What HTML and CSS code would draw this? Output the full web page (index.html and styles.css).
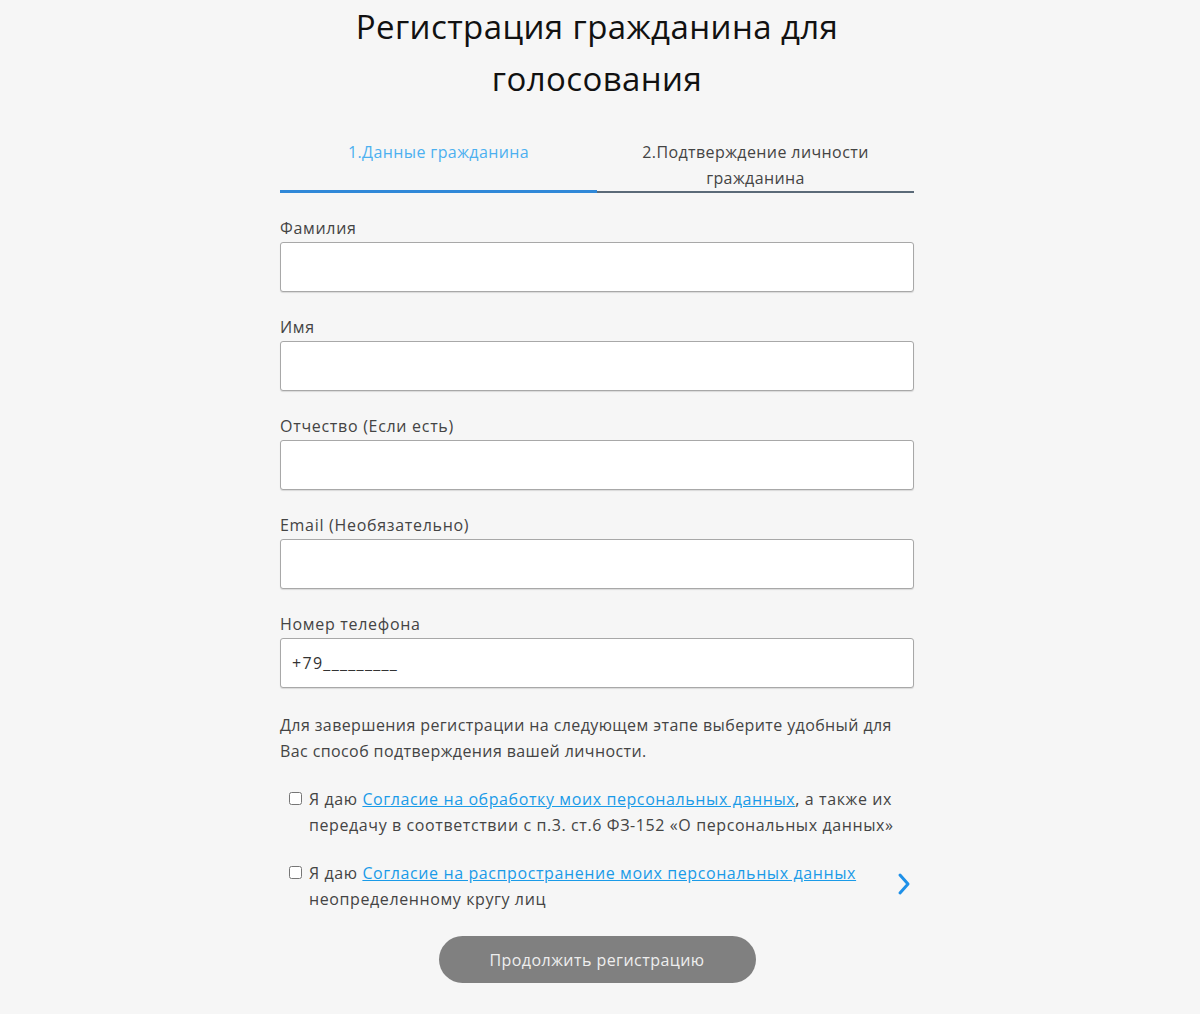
FILE: index.html
```html
<!DOCTYPE html>
<html lang="ru">
<head>
<meta charset="utf-8">
<title>Регистрация гражданина для голосования</title>
<link rel="stylesheet" href="styles.css">
</head>
<body>
<main class="page">
  <h1 class="title">Регистрация гражданина для голосования</h1>
  <div class="tabs">
    <div class="tab tab-active">1.Данные гражданина</div>
    <div class="tab">2.Подтверждение личности гражданина</div>
  </div>
  <form class="form">
    <label class="field">
      <span class="label">Фамилия</span>
      <input class="input" type="text">
    </label>
    <label class="field">
      <span class="label">Имя</span>
      <input class="input" type="text">
    </label>
    <label class="field">
      <span class="label">Отчество (Если есть)</span>
      <input class="input" type="text">
    </label>
    <label class="field">
      <span class="label">Email (Необязательно)</span>
      <input class="input" type="text">
    </label>
    <label class="field">
      <span class="label">Номер телефона</span>
      <input class="input" type="text" value="+79_________">
    </label>
    <p class="note">Для завершения регистрации на следующем этапе выберите удобный для Вас способ подтверждения вашей личности.</p>
    <div class="agree">
      <input class="check" type="checkbox">
      <div class="agree-text">Я даю <a href="#" class="link">Согласие на обработку моих персональных данных</a>, а также их передачу в соответствии с п.3. ст.6 ФЗ-152 «О персональных данных»</div>
    </div>
    <div class="agree agree-2">
      <input class="check" type="checkbox">
      <div class="agree-text">Я даю <a href="#" class="link">Согласие на распространение моих персональных данных</a> неопределенному кругу лиц</div>
      <svg class="chevron" width="16" height="24" viewBox="0 0 16 24"><path d="M4 3 L12 12 L4 21" fill="none" stroke="#1e90e8" stroke-width="3" stroke-linecap="round" stroke-linejoin="round"/></svg>
    </div>
    <div class="actions">
      <button type="button" class="btn">Продолжить регистрацию</button>
    </div>
    <p class="footer-note">Нажимая кнопку, вы Принимаете условия пользовательского соглашения</p>
  </form>
</main>
</body>
</html>
```
FILE: styles.css
```css
html, body {
  margin: 0;
  padding: 0;
  background: #f6f6f6;
}
body {
  font-family: "Open Sans", "Liberation Sans", sans-serif;
  color: #3a3a3a;
}
.page {
  width: 634px;
  margin: 0 auto;
  transform: translateX(-3px);
}
.title {
  margin: 0;
  padding: 1px 70px 0;
  font-size: 33px;
  font-weight: 400;
  line-height: 52px;
  letter-spacing: 0.4px;
  text-align: center;
  color: #111;
}
.tabs {
  display: flex;
  margin-top: 34px;
}
.tab {
  flex: 1;
  text-align: center;
  font-size: 16px;
  line-height: 26px;
  letter-spacing: 0.4px;
  color: #444;
  padding: 0 30px;
  border-bottom: 2px solid #5b6a78;
}
.tab-active {
  color: #4cb0f0;
  border-bottom: 3px solid #3088d8;
  padding-bottom: 25px;
}
.form {
  display: flex;
  flex-direction: column;
  margin-top: 24px;
}
.field {
  display: flex;
  flex-direction: column;
  margin-bottom: 24px;
}
.label {
  font-size: 16px;
  line-height: 22px;
  letter-spacing: 0.7px;
  color: #444;
  margin-bottom: 3px;
}
.input {
  height: 50px;
  box-sizing: border-box;
  border: 1px solid #a8a8a8;
  border-radius: 3px;
  background: #fff;
  box-shadow: 0 1px 1px rgba(0,0,0,0.12);
  font-family: inherit;
  font-size: 16px;
  letter-spacing: 1.3px;
  color: #333;
  padding: 0 11px;
  outline: none;
}
.note {
  margin: 0;
  font-size: 16px;
  line-height: 26px;
  color: #444;
  letter-spacing: 0.4px;
}
.agree {
  display: flex;
  align-items: flex-start;
  margin-top: 22px;
  padding-left: 8px;
}
.agree-2 {
  align-items: center;
  margin-top: 22px;
}
.check {
  width: 13px;
  height: 13px;
  margin: 6px 7px 0 1px;
  flex: none;
  align-self: flex-start;
}
.agree-text {
  font-size: 16px;
  line-height: 26px;
  color: #444;
  flex: 1;
  letter-spacing: 0.6px;
}
.link {
  color: #1a9be8;
  text-decoration: underline;
}
.chevron {
  flex: none;
  margin: -5px 2px 0 30px;
}
.actions {
  display: flex;
  justify-content: center;
  margin-top: 24px;
}
.btn {
  width: 317px;
  height: 47px;
  border: none;
  border-radius: 24px;
  background: #808080;
  color: #eeeeee;
  font-family: inherit;
  font-size: 16px;
  letter-spacing: 0.45px;
  cursor: pointer;
}
.footer-note {
  margin: 24px 0 0;
  font-size: 16px;
  line-height: 26px;
  letter-spacing: 0.5px;
  color: #444;
}
```
